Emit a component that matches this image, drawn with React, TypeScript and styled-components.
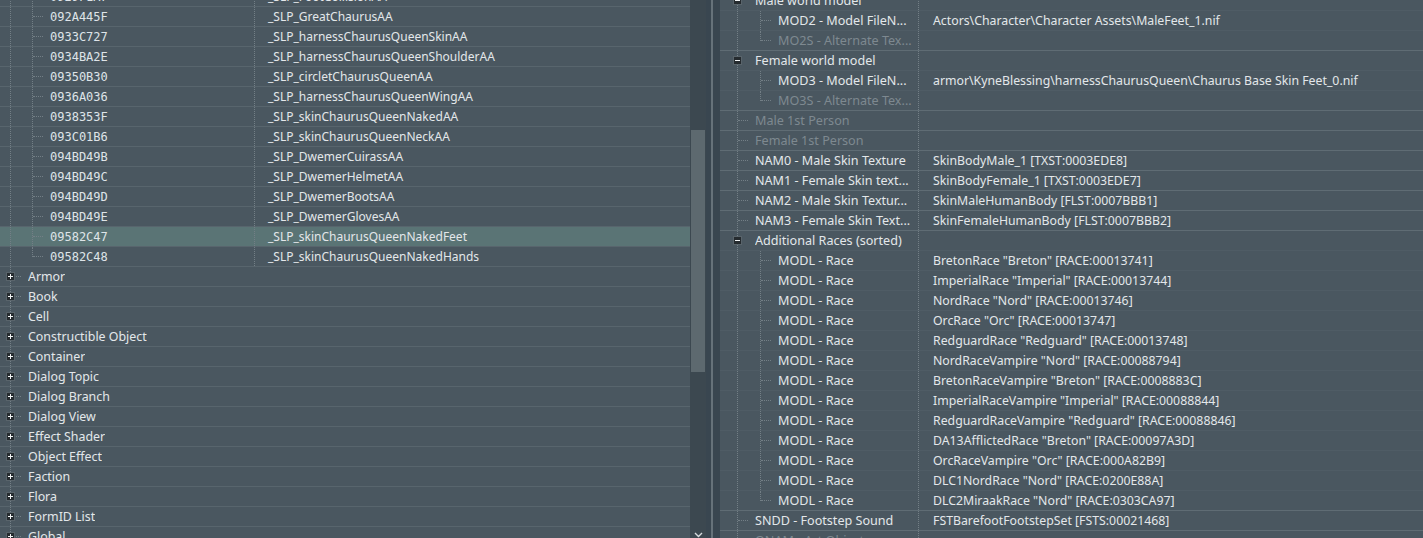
import React from 'react';
import styled, { createGlobalStyle, css } from 'styled-components';

const colors = {
  bg: '#4a5760',
  grid: '#58656d',
  gridFaint: '#4f5c65',
  gridStrong: '#5f6c74',
  selected: '#5a7475',
  text: '#e3e7ea',
  dim: '#7e8990',
  dots: '#737f86',
  track: '#3c4850',
  thumb: '#5d696f',
  splitter: '#394650',
  splitterLine: '#66727a',
};

const GlobalStyle = createGlobalStyle`
  html, body {
    margin: 0;
    padding: 0;
    background: ${colors.bg};
  }
  body {
    font-family: 'Noto Sans', 'Open Sans', sans-serif;
    font-size: 12px;
    color: ${colors.text};
  }
`;

type Child = { id: string; edid: string };

const children: Child[] = [
  { id: '0929F1A7', edid: '_SLP_FootCollisionAA' },
  { id: '092A445F', edid: '_SLP_GreatChaurusAA' },
  { id: '0933C727', edid: '_SLP_harnessChaurusQueenSkinAA' },
  { id: '0934BA2E', edid: '_SLP_harnessChaurusQueenShoulderAA' },
  { id: '09350B30', edid: '_SLP_circletChaurusQueenAA' },
  { id: '0936A036', edid: '_SLP_harnessChaurusQueenWingAA' },
  { id: '0938353F', edid: '_SLP_skinChaurusQueenNakedAA' },
  { id: '093C01B6', edid: '_SLP_skinChaurusQueenNeckAA' },
  { id: '094BD49B', edid: '_SLP_DwemerCuirassAA' },
  { id: '094BD49C', edid: '_SLP_DwemerHelmetAA' },
  { id: '094BD49D', edid: '_SLP_DwemerBootsAA' },
  { id: '094BD49E', edid: '_SLP_DwemerGlovesAA' },
  { id: '09582C47', edid: '_SLP_skinChaurusQueenNakedFeet' },
  { id: '09582C48', edid: '_SLP_skinChaurusQueenNakedHands' },
];

const groups = [
  'Armor',
  'Book',
  'Cell',
  'Constructible Object',
  'Container',
  'Dialog Topic',
  'Dialog Branch',
  'Dialog View',
  'Effect Shader',
  'Object Effect',
  'Faction',
  'Flora',
  'FormID List',
  'Global',
];

type Field = {
  label: string;
  value?: string;
  level: 1 | 2;
  expanded?: boolean;
  dim?: boolean;
  last?: boolean;
};

const races = [
  'BretonRace "Breton" [RACE:00013741]',
  'ImperialRace "Imperial" [RACE:00013744]',
  'NordRace "Nord" [RACE:00013746]',
  'OrcRace "Orc" [RACE:00013747]',
  'RedguardRace "Redguard" [RACE:00013748]',
  'NordRaceVampire "Nord" [RACE:00088794]',
  'BretonRaceVampire "Breton" [RACE:0008883C]',
  'ImperialRaceVampire "Imperial" [RACE:00088844]',
  'RedguardRaceVampire "Redguard" [RACE:00088846]',
  'DA13AfflictedRace "Breton" [RACE:00097A3D]',
  'OrcRaceVampire "Orc" [RACE:000A82B9]',
  'DLC1NordRace "Nord" [RACE:0200E88A]',
  'DLC2MiraakRace "Nord" [RACE:0303CA97]',
];

const fields: Field[] = [
  { label: 'Male world model', level: 1, expanded: true },
  { label: 'MOD2 - Model FileN...', value: 'Actors\\Character\\Character Assets\\MaleFeet_1.nif', level: 2 },
  { label: 'MO2S - Alternate Tex...', level: 2, dim: true, last: true },
  { label: 'Female world model', level: 1, expanded: true },
  {
    label: 'MOD3 - Model FileN...',
    value: 'armor\\KyneBlessing\\harnessChaurusQueen\\Chaurus Base Skin Feet_0.nif',
    level: 2,
  },
  { label: 'MO3S - Alternate Tex...', level: 2, dim: true, last: true },
  { label: 'Male 1st Person', level: 1, dim: true },
  { label: 'Female 1st Person', level: 1, dim: true },
  { label: 'NAM0 - Male Skin Texture', value: 'SkinBodyMale_1 [TXST:0003EDE8]', level: 1 },
  { label: 'NAM1 - Female Skin text...', value: 'SkinBodyFemale_1 [TXST:0003EDE7]', level: 1 },
  { label: 'NAM2 - Male Skin Textur...', value: 'SkinMaleHumanBody [FLST:0007BBB1]', level: 1 },
  { label: 'NAM3 - Female Skin Text...', value: 'SkinFemaleHumanBody [FLST:0007BBB2]', level: 1 },
  { label: 'Additional Races (sorted)', level: 1, expanded: true },
  ...races.map((value, i) => ({
    label: 'MODL - Race',
    value,
    level: 2 as const,
    last: i === races.length - 1,
  })),
  { label: 'SNDD - Footstep Sound', value: 'FSTBarefootFootstepSet [FSTS:00021468]', level: 1 },
  { label: 'ONAM - Art Object', level: 1, dim: true },
];

function ExpandBox({ open }: { open: boolean }) {
  return (
    <Box>
      <svg width="9" height="9" viewBox="0 0 9 9">
        <rect x="0.5" y="0.5" width="8" height="8" fill="#252b2f" stroke="#59646b" />
        <path d="M2 4.5h5" stroke="#f2f4f5" strokeWidth="1" />
        {!open && <path d="M4.5 2v5" stroke="#f2f4f5" strokeWidth="1" />}
      </svg>
    </Box>
  );
}

function ScrollArrow() {
  return (
    <svg width="9" height="6" viewBox="0 0 9 6">
      <path d="M1 1l3.5 3.5L8 1" fill="none" stroke="#d5dadd" strokeWidth="1.4" />
    </svg>
  );
}

export default function App() {
  return (
    <>
      <GlobalStyle />
      <Window>
        <LeftPane>
          <List $offset={13}>
            {children.map((c, i) => (
              <LeftRow key={c.id} $selected={c.id === '09582C47'}>
                <KeyCell>
                  <Guide $w={22} />
                  <Guide $w={18} $branch $half={i === children.length - 1} />
                  <Mono>{c.id}</Mono>
                </KeyCell>
                <NameCell>{c.edid}</NameCell>
              </LeftRow>
            ))}
            {groups.map(g => (
              <LeftRow key={g}>
                <GroupCell>
                  <Guide $w={18} $branch>
                    <ExpandBox open={false} />
                  </Guide>
                  <Label $size={12.4}>{g}</Label>
                </GroupCell>
              </LeftRow>
            ))}
          </List>
        </LeftPane>
        <Scrollbar>
          <Thumb />
          <ArrowSlot>
            <ScrollArrow />
          </ArrowSlot>
        </Scrollbar>
        <Splitter>
          <SplitterLine />
        </Splitter>
        <RightPane>
          <List $offset={9}>
            {fields.map((f, i) => {
              const next = fields[i + 1];
              return (
                <FieldRow key={i} $strong={!next || next.level === 1}>
                  <FieldCell>
                    {f.level === 2 && <Guide $w={23} />}
                    <Guide $w={18} $branch={!f.expanded} $half={f.last}>
                      {f.expanded && <ExpandBox open />}
                    </Guide>
                    <Label $dim={f.dim} $size={12.6}>
                      {f.label}
                    </Label>
                  </FieldCell>
                  <ValueCell>{f.value}</ValueCell>
                </FieldRow>
              );
            })}
          </List>
        </RightPane>
      </Window>
    </>
  );
}

const Window = styled.div`
  display: flex;
  height: 538px;
  width: 1423px;
  overflow: hidden;
  background: ${colors.bg};
`;

const LeftPane = styled.div`
  flex: none;
  width: 690px;
  overflow: hidden;
`;

const RightPane = styled.div`
  flex: 1;
  min-width: 0;
  overflow: hidden;
`;

const List = styled.div<{ $offset: number }>`
  display: flex;
  flex-direction: column;
  margin-top: -${p => p.$offset}px;
`;

const rowBase = css`
  display: flex;
  flex: none;
  height: 20px;
  box-sizing: border-box;
  white-space: nowrap;
`;

const LeftRow = styled.div<{ $selected?: boolean }>`
  ${rowBase};
  border-bottom: 1px solid ${colors.grid};
  background: ${p => (p.$selected ? colors.selected : 'transparent')};
`;

const FieldRow = styled.div<{ $strong?: boolean }>`
  ${rowBase};
  border-bottom: 1px solid ${p => (p.$strong ? colors.gridStrong : colors.gridFaint)};
`;

const cellBase = css`
  display: flex;
  align-items: stretch;
  flex: none;
  box-sizing: border-box;
  overflow: hidden;
`;

const KeyCell = styled.div`
  ${cellBase};
  width: 255px;
  padding-left: 10px;
  border-right: 1px dotted ${colors.dots};
`;

const GroupCell = styled.div`
  ${cellBase};
  flex: 1;
  padding-left: 10px;
`;

const FieldCell = styled.div`
  ${cellBase};
  width: 199px;
  padding-left: 17px;
  border-right: 1px dotted ${colors.dots};
`;

const NameCell = styled.div`
  flex: 1;
  display: flex;
  align-items: center;
  padding-left: 13px;
  overflow: hidden;
`;

const ValueCell = styled.div`
  flex: 1;
  display: flex;
  align-items: center;
  padding-left: 14px;
  font-size: 12.3px;
  overflow: hidden;
`;

const Guide = styled.span<{ $w: number; $branch?: boolean; $half?: boolean }>`
  position: relative;
  flex: none;
  width: ${p => p.$w}px;

  &::before {
    content: '';
    position: absolute;
    left: 0;
    top: 0;
    height: ${p => (p.$half ? '50%' : '100%')};
    border-left: 1px dotted ${colors.dots};
  }

  ${p =>
    p.$branch &&
    css`
      &::after {
        content: '';
        position: absolute;
        left: 1px;
        top: 9px;
        width: 10px;
        border-top: 1px dotted ${colors.dots};
      }
    `}
`;

const Box = styled.span`
  position: absolute;
  left: -4px;
  top: 5px;
  width: 9px;
  height: 9px;
  display: flex;
  z-index: 1;
`;

const Mono = styled.span`
  display: flex;
  align-items: center;
  font-family: 'DejaVu Sans Mono', 'Liberation Mono', monospace;
  font-size: 12px;
  color: #dfe4e8;
`;

const Label = styled.span<{ $dim?: boolean; $size?: number }>`
  display: flex;
  align-items: center;
  overflow: hidden;
  font-size: ${p => p.$size ?? 12}px;
  color: ${p => (p.$dim ? colors.dim : colors.text)};
`;

const Scrollbar = styled.div`
  flex: none;
  width: 16px;
  display: flex;
  flex-direction: column;
  background: ${colors.track};
  padding-top: 130px;
  box-sizing: border-box;
`;

const Thumb = styled.div`
  height: 242px;
  margin: 0 1px 0 1px;
  background: ${colors.thumb};
`;

const ArrowSlot = styled.div`
  margin-top: auto;
  height: 10px;
  display: flex;
  justify-content: center;
  align-items: flex-end;
`;

const Splitter = styled.div`
  flex: none;
  width: 14px;
  display: flex;
  justify-content: center;
  background: ${colors.splitter};
`;

const SplitterLine = styled.div`
  width: 2px;
  margin-left: -2px;
  background: ${colors.splitterLine};
`;
